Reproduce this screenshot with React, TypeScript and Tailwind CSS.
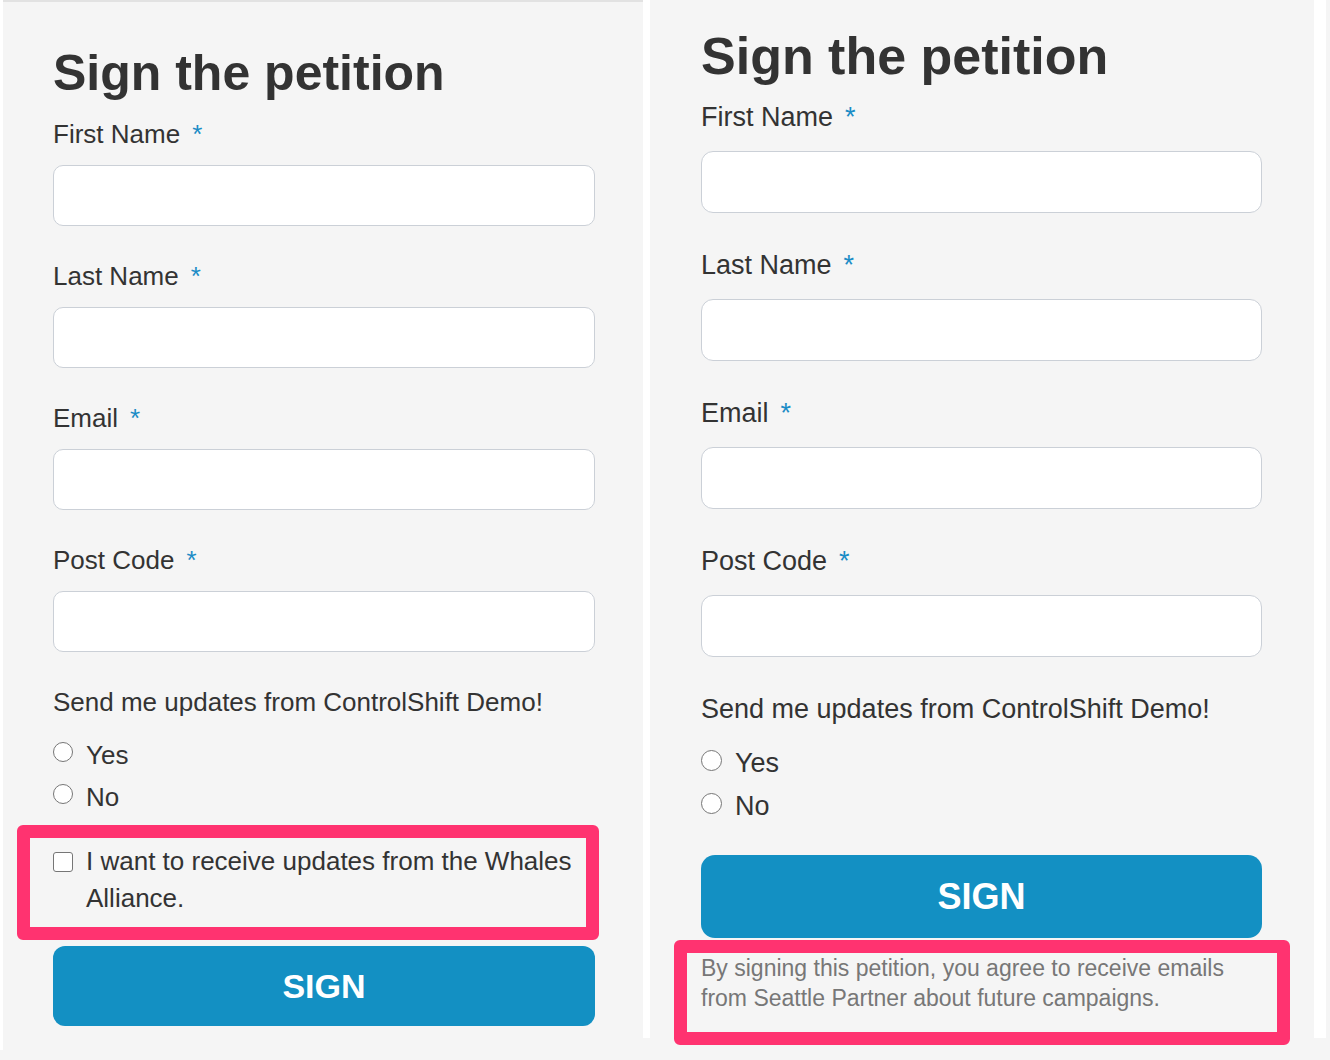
import React from 'react';

type PanelSize = 'sm' | 'lg';

const Label: React.FC<{ text: string; size: PanelSize }> = ({ text, size }) => (
  <div className={size === 'sm' ? 'text-[26px] leading-[32px] text-[#333]' : 'text-[27px] leading-[33px] text-[#333]'}>
    {text}
    <span className="ml-3 text-[#1b8cc6]">*</span>
  </div>
);

const Field: React.FC<{ label: string; size: PanelSize }> = ({ label, size }) => (
  <div className={size === 'sm' ? 'mb-[34px]' : 'mb-[36px]'}>
    <Label text={label} size={size} />
    <input
      type="text"
      className={
        size === 'sm'
          ? 'mt-[15px] block h-[61px] w-full rounded-[10px] border border-[#cbd0d7] bg-white outline-none'
          : 'mt-[17px] block h-[62px] w-full rounded-[12px] border border-[#cbd0d7] bg-white outline-none'
      }
    />
  </div>
);

const Radio: React.FC<{ label: string; size: PanelSize; name: string; className?: string }> = ({ label, size, name, className }) => (
  <label className={`flex items-start gap-[13px] ${className ?? ''}`}>
    <input
      type="radio"
      name={name}
      className={
        size === 'sm'
          ? 'mt-[3px] h-5 w-5 appearance-none rounded-full border border-[#767676] bg-white'
          : 'mt-[3px] h-[21px] w-[21px] appearance-none rounded-full border border-[#767676] bg-white'
      }
    />
    <span className={size === 'sm' ? 'text-[26px] leading-[32px] text-[#333]' : 'text-[27px] leading-[33px] text-[#333]'}>
      {label}
    </span>
  </label>
);

const fields = ['First Name', 'Last Name', 'Email', 'Post Code'];

export default function App() {
  return (
    <div className="flex h-[1060px] w-[1330px] overflow-hidden bg-[#f5f5f5] font-['Liberation_Sans',Arial,sans-serif]">
      <div className="h-[1050px] w-[3px] shrink-0 bg-white" />

      {/* Left: with opt-in checkbox */}
      <div className="h-[1050px] w-[640px] shrink-0 border-t-2 border-[#e2e2e2] bg-[#f5f5f5] pl-[50px] pr-[48px] pt-[46px]">
        <h1 className="mb-5 h-[50px] text-[50px] font-bold leading-none text-[#333]">Sign the petition</h1>
        {fields.map((f) => (
          <Field key={f} label={f} size="sm" />
        ))}
        <div className="text-[26px] leading-[32px] text-[#333]">Send me updates from ControlShift Demo!</div>
        <Radio label="Yes" name="left" size="sm" className="mt-[21px]" />
        <Radio label="No" name="left" size="sm" className="mt-[10px]" />

        <div className="ml-[-36px] mr-[-4px] mt-3 rounded-[6px] border-[13px] border-[#ff3370] pb-[10px] pl-[23px] pt-[5px]">
          <label className="flex items-start gap-[13px]">
            <input
              type="checkbox"
              className="mt-[9px] h-5 w-5 shrink-0 appearance-none rounded-[3px] border border-[#767676] bg-white"
            />
            <span className="text-[26px] leading-[37px] text-[#333]">
              I want to receive updates from the Whales Alliance.
            </span>
          </label>
        </div>

        <button className="mt-[6px] h-20 w-full rounded-[12px] bg-[#1390c3] text-[34px] font-bold text-white">
          SIGN
        </button>
      </div>

      <div className="h-[1038px] w-[7px] shrink-0 bg-white" />

      {/* Right: with disclaimer */}
      <div className="h-[1038px] w-[664px] shrink-0 bg-[#f5f5f5] pl-[51px] pr-[52px] pt-[30px]">
        <h1 className="mb-[19px] h-[52px] text-[52px] font-bold leading-none text-[#333]">Sign the petition</h1>
        {fields.map((f) => (
          <Field key={f} label={f} size="lg" />
        ))}
        <div className="text-[27px] leading-[33px] text-[#333]">Send me updates from ControlShift Demo!</div>
        <Radio label="Yes" name="right" size="lg" className="mt-[21px]" />
        <Radio label="No" name="right" size="lg" className="mt-[10px]" />

        <button className="mt-8 h-[83px] w-full rounded-[14px] bg-[#1390c3] text-[36px] font-bold text-white">
          SIGN
        </button>

        <div className="ml-[-27px] mr-[-28px] mt-[2px] rounded-[6px] border-[13px] border-[#ff3370] pb-[19px] pl-[14px] pr-[30px]">
          <p className="text-[23px] leading-[30px] text-[#777]">
            By signing this petition, you agree to receive emails from Seattle Partner about future campaigns.
          </p>
        </div>
      </div>

      <div className="h-[1038px] w-[12px] shrink-0 bg-white" />
    </div>
  );
}
